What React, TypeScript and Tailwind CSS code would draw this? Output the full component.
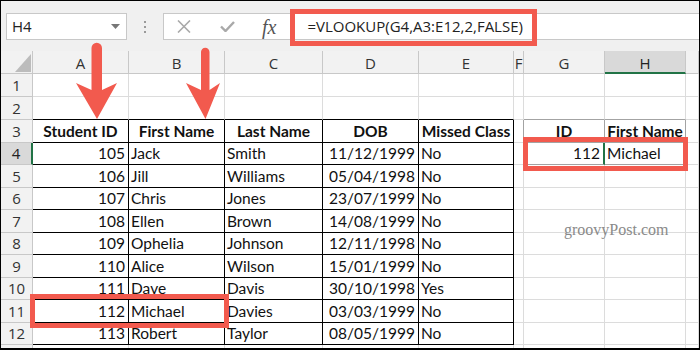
import React from "react";

type Align = "l" | "r" | "c";
interface Cell {
  t: string;
  a: Align;
  b?: boolean;
}

const COLS = ["A", "B", "C", "D", "E", "F", "G", "H", ""];
const ROWS = [1, 2, 3, 4, 5, 6, 7, 8, 9, 10, 11, 12, 13];

const HEADERS = ["Student ID", "First Name", "Last Name", "DOB", "Missed Class"];
const STUDENTS = [
  ["105", "Jack", "Smith", "11/12/1999", "No"],
  ["106", "Jill", "Williams", "05/04/1998", "No"],
  ["107", "Chris", "Jones", "23/07/1999", "No"],
  ["108", "Ellen", "Brown", "14/08/1999", "No"],
  ["109", "Ophelia", "Johnson", "12/11/1998", "No"],
  ["110", "Alice", "Wilson", "15/01/1999", "No"],
  ["111", "Dave", "Davis", "30/10/1998", "Yes"],
  ["112", "Michael", "Davies", "03/03/1999", "No"],
  ["113", "Robert", "Taylor", "08/05/1999", "No"],
];
const DATA_ALIGN: Align[] = ["r", "l", "l", "r", "l"];

function cellAt(r: number, c: number): Cell | null {
  if (r === 3 && c < 5) return { t: HEADERS[c], a: "c", b: true };
  if (r >= 4 && r <= 12 && c < 5) return { t: STUDENTS[r - 4][c], a: DATA_ALIGN[c] };
  if (r === 3 && c === 6) return { t: "ID", a: "c", b: true };
  if (r === 3 && c === 7) return { t: "First Name", a: "c", b: true };
  if (r === 4 && c === 6) return { t: "112", a: "r" };
  if (r === 4 && c === 7) return { t: "Michael", a: "l" };
  return null;
}

// border colours: table = black, lookup range = mid gray, rest = gridline
function rightBorder(r: number, c: number) {
  if (r === 4 && c === 6) return "border-r-2 border-r-[#217346]";
  if (c < 5 && r >= 3 && r <= 12) return "border-r border-r-black";
  if (c >= 5 && c <= 7 && (r === 3 || r === 4)) return "border-r border-r-[#a3a3a3]";
  return "border-r border-r-[#dcdcdc]";
}

function bottomBorder(r: number, c: number) {
  if (c < 5 && r >= 2 && r <= 12) return "border-b border-b-black";
  if ((c === 6 || c === 7) && r >= 2 && r <= 4) return "border-b border-b-[#a3a3a3]";
  return "border-b border-b-[#dcdcdc]";
}

const alignCls: Record<Align, string> = {
  l: "justify-start pl-[2px]",
  r: "justify-end pr-[3px]",
  c: "justify-center",
};

function FormulaBar() {
  return (
    <div className="flex h-[50px] items-start bg-[#f0f0f0] pt-[12px] font-['Open_Sans',sans-serif]">
      <div className="ml-[5px] flex h-[27px] w-[121px] items-center justify-between border border-[#c8c8c8] bg-white pl-[5px] pr-[6px] text-[15px] text-[#222]">
        <span>H4</span>
        <svg width="9" height="5" viewBox="0 0 9 5">
          <polygon points="0,0 9,0 4.5,5" fill="#777" />
        </svg>
      </div>
      <div className="flex w-[36px] flex-col items-center gap-[3px] pt-[8px]">
        <span className="h-[2px] w-[2px] bg-[#9a9a9a]" />
        <span className="h-[2px] w-[2px] bg-[#9a9a9a]" />
        <span className="h-[2px] w-[2px] bg-[#9a9a9a]" />
      </div>
      <div className="flex h-[27px] flex-1 items-center border-y border-l border-[#c8c8c8] bg-white">
        <svg className="ml-[13px]" width="14" height="13" viewBox="0 0 14 13">
          <path d="M1 0.5 L13 12.5 M13 0.5 L1 12.5" stroke="#a9a9a9" strokeWidth="1.6" />
        </svg>
        <svg className="ml-[29px]" width="15" height="11" viewBox="0 0 15 11">
          <path d="M1 5.5 L5.5 10 L14 1" stroke="#a9a9a9" strokeWidth="2.4" fill="none" />
        </svg>
        <span className="ml-[27px] font-['Liberation_Serif',serif] text-[20px] italic leading-none text-[#555]">fx</span>
        <span className="ml-[31px] text-[15px] text-[#222]">=VLOOKUP(G4,A3:E12,2,FALSE)</span>
      </div>
    </div>
  );
}

export default function App() {
  return (
    <div className="relative h-[350px] w-[700px] overflow-hidden border-x border-t border-b-2 border-black bg-white">
      <FormulaBar />
      <div className="grid h-[297px] grid-cols-[32px_96px_96px_98px_96px_95px_10px_81px_81px_1fr] grid-rows-[23px_23px_23px_23px_22px_23px_22px_23px_22px_23px_22px_23px_22px_1fr]">
        {/* corner */}
        <div className="flex items-end justify-end border-b border-r border-[#c8c8c8] bg-[#f2f2f2] pb-[1px] pr-[1px]">
          <svg width="16" height="18" viewBox="0 0 16 18">
            <polygon points="16,0 16,18 0,18" fill="#bcbcbc" />
          </svg>
        </div>
        {COLS.map((col, c) => (
          <div
            key={"h" + c}
            className={
              "flex items-end justify-center font-['Open_Sans',sans-serif] text-[15px] leading-none " +
              (col === "H"
                ? "border-b-2 border-r border-b-[#217346] border-r-[#c8c8c8] bg-[#d9d9d9] pb-[1px] text-[#222]"
                : "border-b border-r border-[#c8c8c8] bg-[#f2f2f2] pb-[2px] text-[#333]")
            }
          >
            {col}
          </div>
        ))}
        {ROWS.map((r) => (
          <React.Fragment key={"r" + r}>
            <div
              className={
                "flex items-end justify-center overflow-hidden font-['Open_Sans',sans-serif] text-[15px] leading-none " +
                (r === 4
                  ? "border-b border-r-2 border-b-[#c8c8c8] border-r-[#217346] bg-[#d9d9d9] pb-[3px] text-[#222]"
                  : "border-b border-r border-[#c8c8c8] bg-[#f2f2f2] pb-[3px] text-[#333]")
              }
            >
              {/* row 13 is only a sliver at the bottom edge, its number is out of view */}
              {r < 13 ? r : null}
            </div>
            {COLS.map((_, c) => {
              const cell = cellAt(r, c);
              return (
                <div
                  key={r + "-" + c}
                  className={
                    "flex items-end whitespace-nowrap pb-[3px] font-['Lato',sans-serif] text-[15.5px] leading-none text-[#111] " +
                    rightBorder(r, c) +
                    " " +
                    bottomBorder(r, c) +
                    " " +
                    (cell ? alignCls[cell.a] + (cell.b ? " font-bold" : "") : "")
                  }
                >
                  {cell?.t}
                </div>
              );
            })}
          </React.Fragment>
        ))}
      </div>

      {/* annotations */}
      <svg className="pointer-events-none absolute left-0 top-0" width="700" height="130" viewBox="0 0 700 130">
        <path d="M90.5 47 A5.25 5.25 0 0 1 101 47 L101 89 L116 82 L96 118 L75 82 L90.5 89 Z" fill="#f25a4e" />
        <path d="M200 51 A4.25 4.25 0 0 1 208.5 51 L208.5 89 L219 82 L204.5 118 L185 82 L200 89 Z" fill="#f25a4e" />
      </svg>
      <div className="pointer-events-none absolute left-[289px] top-[8px] h-[37px] w-[247px] border-[5px] border-[#f25a4e]" />
      <div className="pointer-events-none absolute left-[29px] top-[293px] h-[34px] w-[199px] border-[5px] border-[#f25a4e]" />
      <div className="pointer-events-none absolute left-[522px] top-[136px] h-[34px] w-[165px] border-[5px] border-[#f25a4e]" />
      <div className="pointer-events-none absolute left-[563px] top-[221px] font-['Liberation_Serif',serif] text-[16px] leading-none text-[#8a8a8a]">
        groovyPost.com
      </div>
    </div>
  );
}
